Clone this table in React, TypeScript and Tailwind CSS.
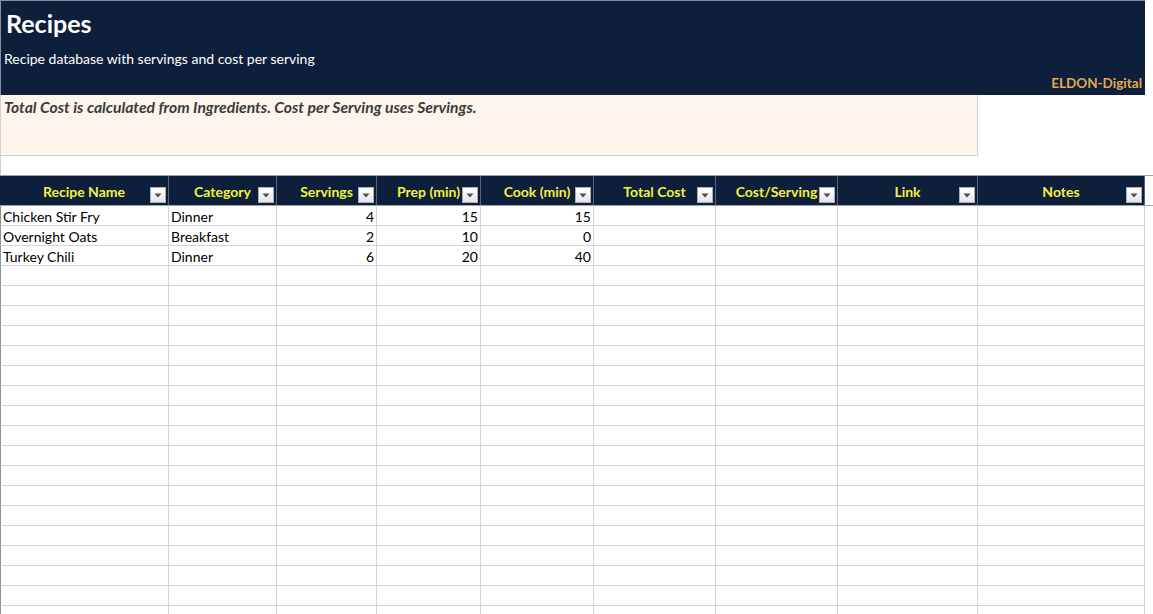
const columns = [
  { label: "Recipe Name", w: "w-[169px]" },
  { label: "Category", w: "w-[108px]" },
  { label: "Servings", w: "w-[100px]" },
  { label: "Prep (min)", w: "w-[104px]" },
  { label: "Cook (min)", w: "w-[113px]" },
  { label: "Total Cost", w: "w-[122px]" },
  { label: "Cost/Serving", w: "w-[122px]" },
  { label: "Link", w: "w-[140px]" },
  { label: "Notes", w: "w-[167px]" },
]

const rows: (string | number)[][] = [
  ["Chicken Stir Fry", "Dinner", 4, 15, 15],
  ["Overnight Oats", "Breakfast", 2, 10, 0],
  ["Turkey Chili", "Dinner", 6, 20, 40],
]

function FilterButton() {
  return (
    <span className="absolute bottom-[2px] right-[2px] flex h-[16px] w-[16px] items-center justify-center border border-[#a9aeb6] bg-gradient-to-b from-white to-[#e4e6ea]">
      <svg width="8" height="5" viewBox="0 0 8 5">
        <path d="M0.5 0.5 L7.5 0.5 L4 4.5 Z" fill="#505050" />
      </svg>
    </span>
  )
}

export default function App() {
  const blank = Array.from({ length: 18 })
  return (
    <div className="flex h-[614px] w-[1153px] flex-col overflow-hidden bg-white font-['Lato','Open_Sans',sans-serif] text-[14px] text-black">
      <div className="flex h-[95px] w-[1145px] shrink-0 flex-col border-t border-l border-[#8a8f98] bg-[#0e1f3c] pl-[3px] pr-[3px]">
        <h1 className="mt-[7px] pl-[2px] text-[25px] font-bold leading-[30px] text-white">Recipes</h1>
        <p className="mt-[12px] text-[14px] leading-[17px] text-white">Recipe database with servings and cost per serving</p>
        <div className="mt-auto mb-[4px] text-right text-[13.5px] font-bold leading-[16px] text-[#e0a94f]">ELDON-Digital</div>
      </div>

      <div className="h-[61px] w-[978px] shrink-0 border-r border-b border-l border-[#cfcfcf] bg-[#fdf4ec] px-[3px] pt-[3px] text-[15.7px] font-bold italic leading-[18px] text-[#3b3b3b]">
        Total Cost is calculated from Ingredients. Cost per Serving uses Servings.
      </div>

      <div className="h-[19px] shrink-0 border-l border-[#cfcfcf]" />

      <div className="flex h-[31px] w-[1153px] shrink-0 border-t border-b border-[#9aa1ab]">
        {columns.map((c) => (
          <div
            key={c.label}
            className={`relative flex ${c.w} shrink-0 items-center justify-center border-r border-[#56657d] bg-[#0e1f3c] pt-[1px] text-[14px] font-bold text-[#f2f23a]`}
          >
            {c.label}
            <FilterButton />
          </div>
        ))}
      </div>

      {rows.map((r, i) => (
        <div key={i} className="flex h-[20px] shrink-0 leading-[22px]">
          {columns.map((c, j) => {
            const v = r[j]
            const num = typeof v === "number"
            return (
              <div
                key={c.label}
                className={`${c.w} shrink-0 border-r border-b border-[#d2d6dc] ${num ? "pr-[2px] text-right" : "pl-[2px] text-left"} ${j === 0 ? "border-l border-l-[#8a8f98]" : ""}`}
              >
                {v ?? ""}
              </div>
            )
          })}
        </div>
      ))}

      {blank.map((_, i) => (
        <div key={`b${i}`} className="flex h-[20px] shrink-0">
          {columns.map((c, j) => (
            <div
              key={c.label}
              className={`${c.w} shrink-0 border-r border-b border-[#d2d6dc] ${j === 0 ? "border-l border-l-[#8a8f98]" : ""}`}
            />
          ))}
        </div>
      ))}
    </div>
  )
}
